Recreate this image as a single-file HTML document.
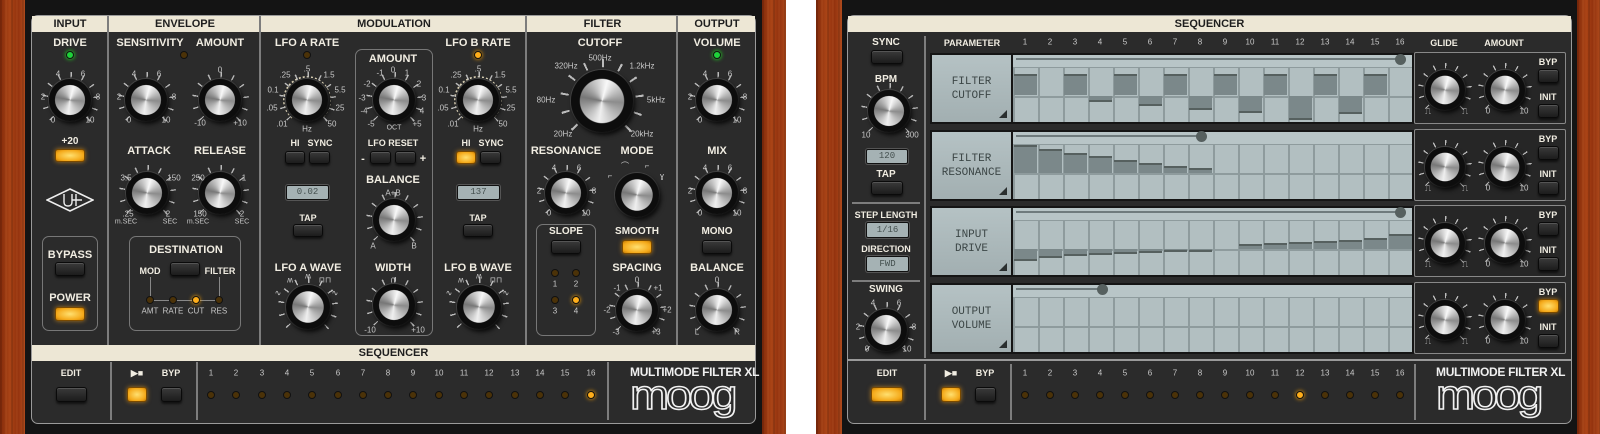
<!DOCTYPE html>
<html><head><meta charset="utf-8"><style>
*{margin:0;padding:0;box-sizing:border-box}
body{width:1600px;height:434px;background:#fff;position:relative;overflow:hidden;font-family:"Liberation Sans",sans-serif}
.a{position:absolute}
.wood{position:absolute;top:0;height:434px;background:repeating-linear-gradient(90deg,rgba(0,0,0,.12) 0 2px,transparent 2px 5px,rgba(255,160,90,.08) 5px 7px,transparent 7px 11px),linear-gradient(90deg,#832a0a,#aa4416 40%,#93320e 70%,#ae4a1c)}
.frame{position:absolute;top:0;height:434px;background:#141414}
.panel{position:absolute;top:15px;height:409px;background:#2b2b2b;border:1px solid #9a9a9a;border-radius:7px;overflow:hidden}
.cream{position:absolute;background:#ede7d5;color:#1e1e1e;font-weight:bold;font-size:11px;text-align:center;line-height:16px}
.vl{position:absolute;width:2px;background:#7d7d7d}
.hl{position:absolute;height:2px;background:#7d7d7d}
.t{position:absolute;transform:translateX(-50%);white-space:nowrap;color:#f1ede2;font-weight:bold;font-size:11px;line-height:12px}
.s{position:absolute;transform:translate(-50%,-50%);white-space:nowrap;color:#c9c9c9;font-size:8px;line-height:9px}
.b{position:absolute;background:linear-gradient(#3a3a3a,#1c1c1c);border:1px solid #0a0a0a;border-radius:3px;box-shadow:0 1px 0 #555 inset,0 2px 2px rgba(0,0,0,.6)}
.o{background:radial-gradient(ellipse at 50% 50%,#ffe070,#f4a818 70%,#c07a08);border-color:#7a4a00;box-shadow:0 0 5px rgba(255,170,30,.6)}
.led{position:absolute;width:8px;height:8px;margin:-4px 0 0 -4px;border-radius:50%;background:#4b3208;border:1px solid #111}
.led.y{background:#ffae1a;box-shadow:0 0 4px #ffa500}
.led.g{background:#1fd23a;box-shadow:0 0 4px #2f2}
.lcd{position:absolute;background:#a5b2b4;border:1px solid #111;border-radius:2px;color:#44504f;font-family:"Liberation Mono",monospace;font-size:9px;text-align:center;box-shadow:0 0 0 1px #555}
.box{position:absolute;border:1px solid #777;border-radius:7px}
.kn{position:absolute;width:calc(var(--d)*1.5);height:calc(var(--d)*1.5);margin-left:calc(var(--d)*-.75);margin-top:calc(var(--d)*-.75);border-radius:50%;background:radial-gradient(circle closest-side,#2b2b2b 0 80%,transparent 81%),conic-gradient(from 140deg,#2b2b2b 0 80deg,transparent 0),repeating-conic-gradient(from 225deg,#bbb 0 3deg,transparent 0 27deg)}
.kn::after{content:"";position:absolute;inset:calc(var(--d)*.2);border-radius:50%;background:radial-gradient(circle closest-side,transparent 0 70%,#0d0d0d 73% 100%),conic-gradient(from 15deg,#f8f8f8,#8c8c8c 22%,#efefef 48%,#777 74%,#f8f8f8);box-shadow:2px 3px 5px rgba(0,0,0,.8),0 0 0 1px #444}
.ring{position:absolute;border:2px dotted #d8cfb4;border-radius:50%}
.lab{position:absolute;background:linear-gradient(#b5c2c4,#a2afb1);border:2px solid #151515;color:#3c4646;font-family:"Liberation Mono",monospace;font-size:11px;text-align:center;line-height:14px;padding-top:20px}
.lab::after{content:"";position:absolute;right:4px;bottom:4px;border-left:8px solid transparent;border-bottom:8px solid #2a2f2f}
.grid{position:absolute;border:2px solid #151515;background:linear-gradient(#b8c5c7 0 12px,#8e9b9d 12px 13px,transparent 13px),repeating-linear-gradient(90deg,#8e9b9d 0 2px,transparent 2px 25px),linear-gradient(transparent 0 41px,#8e9b9d 41px 43px,transparent 43px),#b2bfc1}
.sl{position:absolute;height:2px;background:#6f7b7d}
.dot{position:absolute;width:11px;height:11px;border-radius:50%;background:#56605f;margin:-5px 0 0 -5px}
.bar{position:absolute;width:23px;background:#7b888a;border-top:2px solid #56605f}
.bar.d{border-top:none;border-bottom:2px solid #56605f}
.kb{position:absolute;border:1px solid #888;background:#262626;border-radius:2px}
.logo1{position:absolute;color:#f0f0f0;font-weight:bold;font-size:12px;letter-spacing:-.3px;white-space:nowrap}
.moog{position:absolute;font-family:"Liberation Sans",sans-serif;font-size:42px;font-weight:normal;letter-spacing:-3px;color:transparent;-webkit-text-stroke:1.5px #f2f2f2;line-height:34px;transform:scaleX(1.12);transform-origin:left}
.k2{background:radial-gradient(circle closest-side,#262626 0 80%,transparent 81%),conic-gradient(from 140deg,#262626 0 80deg,transparent 0),repeating-conic-gradient(from 225deg,#bbb 0 3deg,transparent 0 27deg)}
</style></head><body>

<!-- LEFT PLUGIN -->
<div class="wood" style="left:0;width:25px"></div>
<div class="frame" style="left:25px;width:737px"></div>
<div class="wood" style="left:762px;width:24px"></div>
<div class="panel" style="left:31px;width:725px"></div>
<div class="cream" style="left:32px;top:16px;width:723px;height:16px"></div>
<div class="cream" style="left:32px;top:16px;width:76px">INPUT</div>
<div class="cream" style="left:110px;top:16px;width:150px">ENVELOPE</div>
<div class="cream" style="left:262px;top:16px;width:264px">MODULATION</div>
<div class="cream" style="left:528px;top:16px;width:149px">FILTER</div>
<div class="cream" style="left:679px;top:16px;width:76px">OUTPUT</div>
<div class="vl" style="left:107px;top:16px;height:329px"></div>
<div class="vl" style="left:259px;top:16px;height:329px"></div>
<div class="vl" style="left:525px;top:16px;height:329px"></div>
<div class="vl" style="left:676px;top:16px;height:329px"></div>
<div class="cream" style="left:32px;top:345px;width:723px;height:16px">SEQUENCER</div>
<div class="vl" style="left:110px;top:362px;height:58px"></div>
<div class="vl" style="left:196px;top:362px;height:58px"></div>
<div class="vl" style="left:607px;top:362px;height:58px"></div>

<!-- INPUT -->
<div class="t" style="left:70px;top:37px">DRIVE</div>
<div class="led g" style="left:70px;top:55px"></div>
<div class="kn" style="left:70px;top:100px;--d:38px"></div>
<div class="s" style="left:53px;top:120px">0</div><div class="s" style="left:90px;top:120px">10</div><div class="s" style="left:43px;top:97px">2</div><div class="s" style="left:98px;top:97px">8</div><div class="s" style="left:58px;top:74px">4</div><div class="s" style="left:83px;top:74px">6</div>
<div class="t" style="left:70px;top:136px;font-size:10px">+20</div>
<div class="b o" style="left:55px;top:149px;width:30px;height:13px"></div>
<svg class="a" style="left:46px;top:188px" width="48" height="24" viewBox="0 0 48 24"><polygon points="24,1 47,12 24,23 1,12" fill="none" stroke="#eee" stroke-width="1.6"/><path d="M18 6v8q0 4 4 4h0q4 0 4-4V6M26 12h10M30 6v12" fill="none" stroke="#eee" stroke-width="1.4"/></svg>
<div class="box" style="left:42px;top:236px;width:56px;height:95px"></div>
<div class="t" style="left:70px;top:249px">BYPASS</div>
<div class="b" style="left:55px;top:262px;width:30px;height:14px"></div>
<div class="t" style="left:70px;top:292px">POWER</div>
<div class="b o" style="left:55px;top:307px;width:30px;height:14px"></div>

<!-- ENVELOPE -->
<div class="t" style="left:150px;top:37px">SENSITIVITY</div>
<div class="t" style="left:220px;top:37px">AMOUNT</div>
<div class="led" style="left:184px;top:55px"></div>
<div class="kn" style="left:146px;top:100px;--d:38px"></div>
<div class="s" style="left:129px;top:120px">0</div><div class="s" style="left:166px;top:120px">10</div><div class="s" style="left:119px;top:97px">2</div><div class="s" style="left:174px;top:97px">8</div><div class="s" style="left:134px;top:74px">4</div><div class="s" style="left:159px;top:74px">6</div>
<div class="kn" style="left:220px;top:100px;--d:38px"></div>
<div class="s" style="left:200px;top:123px">-10</div><div class="s" style="left:240px;top:123px">+10</div><div class="s" style="left:220px;top:70px">0</div>
<div class="t" style="left:149px;top:145px">ATTACK</div>
<div class="t" style="left:220px;top:145px">RELEASE</div>
<div class="kn" style="left:147px;top:193px;--d:38px"></div>
<div class="s" style="left:126px;top:178px">3.5</div><div class="s" style="left:174px;top:178px">150</div><div class="s" style="left:128px;top:214px">.25</div><div class="s" style="left:168px;top:214px">2</div><div class="s" style="left:126px;top:222px;font-size:7px">m.SEC</div><div class="s" style="left:170px;top:222px;font-size:7px">SEC</div>
<div class="kn" style="left:220px;top:193px;--d:38px"></div>
<div class="s" style="left:198px;top:178px">250</div><div class="s" style="left:244px;top:178px">1</div><div class="s" style="left:200px;top:214px">150</div><div class="s" style="left:242px;top:214px">2</div><div class="s" style="left:198px;top:222px;font-size:7px">m.SEC</div><div class="s" style="left:242px;top:222px;font-size:7px">SEC</div>
<div class="box" style="left:129px;top:236px;width:112px;height:95px"></div>
<div class="t" style="left:186px;top:244px">DESTINATION</div>
<div class="t" style="left:150px;top:265px;font-size:9px">MOD</div>
<div class="t" style="left:220px;top:265px;font-size:9px">FILTER</div>
<div class="b" style="left:170px;top:262px;width:30px;height:14px"></div>
<div class="a" style="left:150px;top:277px;width:1px;height:23px;background:#888"></div>
<div class="a" style="left:219px;top:277px;width:1px;height:23px;background:#888"></div>
<div class="a" style="left:150px;top:300px;width:70px;height:1px;background:#888"></div>
<div class="led" style="left:150px;top:300px"></div><div class="led" style="left:173px;top:300px"></div><div class="led y" style="left:196px;top:300px"></div><div class="led" style="left:219px;top:300px"></div>
<div class="s" style="left:150px;top:311px">AMT</div><div class="s" style="left:173px;top:311px">RATE</div><div class="s" style="left:196px;top:311px">CUT</div><div class="s" style="left:219px;top:311px">RES</div>

<!-- MODULATION -->
<div class="t" style="left:307px;top:37px">LFO A RATE</div>
<div class="led" style="left:307px;top:55px"></div>
<div class="ring" style="left:283px;top:76px;width:48px;height:48px"></div>
<div class="kn" style="left:307px;top:100px;--d:38px"></div>
<div class="s" style="left:285px;top:75px">.25</div><div class="s" style="left:307px;top:69px">.5</div><div class="s" style="left:329px;top:75px">1.5</div><div class="s" style="left:273px;top:90px">0.1</div><div class="s" style="left:340px;top:90px">5.5</div><div class="s" style="left:272px;top:108px">.05</div><div class="s" style="left:340px;top:108px">25</div><div class="s" style="left:282px;top:124px">.01</div><div class="s" style="left:332px;top:124px">50</div><div class="s" style="left:307px;top:129px">Hz</div>
<div class="t" style="left:295px;top:137px;font-size:9px">HI</div><div class="t" style="left:320px;top:137px;font-size:9px">SYNC</div>
<div class="b" style="left:285px;top:151px;width:20px;height:13px"></div><div class="b" style="left:309px;top:151px;width:21px;height:13px"></div>
<div class="lcd" style="left:286px;top:185px;width:43px;height:15px;line-height:13px">0.02</div>
<div class="t" style="left:308px;top:212px;font-size:9px">TAP</div>
<div class="b" style="left:293px;top:224px;width:30px;height:13px"></div>
<div class="t" style="left:308px;top:262px">LFO A WAVE</div>
<div class="kn" style="left:308px;top:307px;--d:40px"></div>
<div class="s" style="left:278px;top:293px">∿</div><div class="s" style="left:290px;top:280px">ʍ</div><div class="s" style="left:308px;top:276px">ʍ</div><div class="s" style="left:325px;top:280px">⊓⊓</div><div class="s" style="left:335px;top:293px">∿</div>

<div class="box" style="left:355px;top:49px;width:78px;height:287px"></div>
<div class="t" style="left:393px;top:53px">AMOUNT</div>
<div class="kn" style="left:394px;top:100px;--d:38px"></div>
<div class="s" style="left:380px;top:73px">-1</div><div class="s" style="left:393px;top:70px">0</div><div class="s" style="left:407px;top:73px">1</div><div class="s" style="left:367px;top:84px">-2</div><div class="s" style="left:419px;top:84px">2</div><div class="s" style="left:362px;top:98px">-3</div><div class="s" style="left:424px;top:98px">3</div><div class="s" style="left:364px;top:111px">-4</div><div class="s" style="left:422px;top:111px">4</div><div class="s" style="left:371px;top:124px">-5</div><div class="s" style="left:417px;top:124px">+5</div><div class="s" style="left:394px;top:128px;font-size:7px">OCT</div>
<div class="t" style="left:393px;top:137px;font-size:9px">LFO RESET</div>
<div class="t" style="left:363px;top:153px">-</div><div class="t" style="left:423px;top:153px">+</div>
<div class="b" style="left:370px;top:151px;width:21px;height:13px"></div><div class="b" style="left:395px;top:151px;width:21px;height:13px"></div>
<div class="t" style="left:393px;top:174px">BALANCE</div>
<div class="s" style="left:393px;top:193px">A+B</div>
<div class="kn" style="left:394px;top:220px;--d:38px"></div>
<div class="s" style="left:373px;top:246px">A</div><div class="s" style="left:414px;top:246px">B</div>
<div class="t" style="left:393px;top:262px">WIDTH</div>
<div class="s" style="left:393px;top:281px">0</div>
<div class="kn" style="left:394px;top:305px;--d:38px"></div>
<div class="s" style="left:370px;top:330px">-10</div><div class="s" style="left:418px;top:330px">+10</div>

<div class="t" style="left:478px;top:37px">LFO B RATE</div>
<div class="led y" style="left:478px;top:55px"></div>
<div class="ring" style="left:454px;top:76px;width:48px;height:48px"></div>
<div class="kn" style="left:478px;top:100px;--d:38px"></div>
<div class="s" style="left:456px;top:75px">.25</div><div class="s" style="left:478px;top:69px">.5</div><div class="s" style="left:500px;top:75px">1.5</div><div class="s" style="left:444px;top:90px">0.1</div><div class="s" style="left:511px;top:90px">5.5</div><div class="s" style="left:443px;top:108px">.05</div><div class="s" style="left:511px;top:108px">25</div><div class="s" style="left:453px;top:124px">.01</div><div class="s" style="left:503px;top:124px">50</div><div class="s" style="left:478px;top:129px">Hz</div>
<div class="t" style="left:466px;top:137px;font-size:9px">HI</div><div class="t" style="left:491px;top:137px;font-size:9px">SYNC</div>
<div class="b o" style="left:456px;top:151px;width:20px;height:13px"></div><div class="b" style="left:480px;top:151px;width:21px;height:13px"></div>
<div class="lcd" style="left:457px;top:185px;width:43px;height:15px;line-height:13px">137</div>
<div class="t" style="left:478px;top:212px;font-size:9px">TAP</div>
<div class="b" style="left:463px;top:224px;width:30px;height:13px"></div>
<div class="t" style="left:478px;top:262px">LFO B WAVE</div>
<div class="kn" style="left:479px;top:307px;--d:40px"></div>
<div class="s" style="left:449px;top:293px">∿</div><div class="s" style="left:461px;top:280px">ʍ</div><div class="s" style="left:479px;top:276px">ʍ</div><div class="s" style="left:496px;top:280px">⊓⊓</div><div class="s" style="left:506px;top:293px">∿</div>

<!-- FILTER -->
<div class="t" style="left:600px;top:37px">CUTOFF</div>
<div class="kn" style="left:602px;top:101px;--d:56px"></div>
<div class="s" style="left:566px;top:66px">320Hz</div><div class="s" style="left:600px;top:58px">500Hz</div><div class="s" style="left:642px;top:66px">1.2kHz</div><div class="s" style="left:546px;top:100px">80Hz</div><div class="s" style="left:656px;top:100px">5kHz</div><div class="s" style="left:563px;top:134px">20Hz</div><div class="s" style="left:642px;top:134px">20kHz</div>
<div class="t" style="left:566px;top:145px">RESONANCE</div>
<div class="t" style="left:637px;top:145px">MODE</div>
<div class="kn" style="left:566px;top:193px;--d:38px"></div>
<div class="s" style="left:549px;top:213px">0</div><div class="s" style="left:586px;top:213px">10</div><div class="s" style="left:539px;top:191px">2</div><div class="s" style="left:594px;top:191px">8</div><div class="s" style="left:554px;top:168px">4</div><div class="s" style="left:579px;top:168px">6</div>
<div class="kn" style="left:637px;top:195px;--d:40px;background:none"></div>
<div class="s" style="left:610px;top:176px">⌐</div><div class="s" style="left:625px;top:166px">⌒</div><div class="s" style="left:647px;top:166px">⌐</div><div class="s" style="left:662px;top:176px">ɣ</div>
<div class="box" style="left:536px;top:224px;width:60px;height:112px"></div>
<div class="t" style="left:566px;top:226px;font-size:10px">SLOPE</div>
<div class="b" style="left:551px;top:240px;width:30px;height:14px"></div>
<div class="led" style="left:555px;top:273px"></div><div class="led" style="left:576px;top:273px"></div><div class="led" style="left:555px;top:300px"></div><div class="led y" style="left:576px;top:300px"></div>
<div class="s" style="left:555px;top:284px">1</div><div class="s" style="left:576px;top:284px">2</div><div class="s" style="left:555px;top:311px">3</div><div class="s" style="left:576px;top:311px">4</div>
<div class="t" style="left:637px;top:226px;font-size:10px">SMOOTH</div>
<div class="b o" style="left:622px;top:240px;width:30px;height:14px"></div>
<div class="t" style="left:637px;top:262px">SPACING</div>
<div class="kn" style="left:637px;top:310px;--d:38px"></div>
<div class="s" style="left:637px;top:280px">0</div><div class="s" style="left:617px;top:288px">-1</div><div class="s" style="left:658px;top:288px">+1</div><div class="s" style="left:607px;top:310px">-2</div><div class="s" style="left:667px;top:310px">+2</div><div class="s" style="left:616px;top:332px">-3</div><div class="s" style="left:656px;top:332px">+3</div>

<!-- OUTPUT -->
<div class="t" style="left:717px;top:37px">VOLUME</div>
<div class="led g" style="left:717px;top:55px"></div>
<div class="kn" style="left:717px;top:100px;--d:38px"></div>
<div class="s" style="left:700px;top:120px">0</div><div class="s" style="left:737px;top:120px">10</div><div class="s" style="left:690px;top:97px">2</div><div class="s" style="left:745px;top:97px">8</div><div class="s" style="left:705px;top:74px">4</div><div class="s" style="left:730px;top:74px">6</div>
<div class="t" style="left:717px;top:145px">MIX</div>
<div class="kn" style="left:717px;top:193px;--d:38px"></div>
<div class="s" style="left:700px;top:213px">0</div><div class="s" style="left:737px;top:213px">10</div><div class="s" style="left:690px;top:191px">2</div><div class="s" style="left:745px;top:191px">8</div><div class="s" style="left:705px;top:168px">4</div><div class="s" style="left:730px;top:168px">6</div>
<div class="t" style="left:717px;top:226px;font-size:10px">MONO</div>
<div class="b" style="left:702px;top:240px;width:30px;height:14px"></div>
<div class="t" style="left:717px;top:262px">BALANCE</div>
<div class="kn" style="left:717px;top:310px;--d:38px"></div>
<div class="s" style="left:717px;top:280px">0</div><div class="s" style="left:697px;top:332px">L</div><div class="s" style="left:737px;top:332px">R</div>

<!-- LEFT BOTTOM -->
<div class="t" style="left:71px;top:367px;font-size:9px">EDIT</div>
<div class="b" style="left:56px;top:387px;width:31px;height:15px"></div>
<div class="t" style="left:137px;top:367px;font-size:9px">▶■</div>
<div class="t" style="left:171px;top:367px;font-size:9px">BYP</div>
<div class="b o" style="left:127px;top:387px;width:20px;height:15px"></div>
<div class="b" style="left:161px;top:387px;width:21px;height:15px"></div>
<div class="s" style="left:211px;top:373px">1</div><div class="s" style="left:236px;top:373px">2</div><div class="s" style="left:262px;top:373px">3</div><div class="s" style="left:287px;top:373px">4</div><div class="s" style="left:312px;top:373px">5</div><div class="s" style="left:338px;top:373px">6</div><div class="s" style="left:363px;top:373px">7</div><div class="s" style="left:388px;top:373px">8</div><div class="s" style="left:413px;top:373px">9</div><div class="s" style="left:439px;top:373px">10</div><div class="s" style="left:464px;top:373px">11</div><div class="s" style="left:489px;top:373px">12</div><div class="s" style="left:515px;top:373px">13</div><div class="s" style="left:540px;top:373px">14</div><div class="s" style="left:565px;top:373px">15</div><div class="s" style="left:591px;top:373px">16</div>
<div class="led" style="left:211px;top:395px"></div><div class="led" style="left:236px;top:395px"></div><div class="led" style="left:262px;top:395px"></div><div class="led" style="left:287px;top:395px"></div><div class="led" style="left:312px;top:395px"></div><div class="led" style="left:338px;top:395px"></div><div class="led" style="left:363px;top:395px"></div><div class="led" style="left:388px;top:395px"></div><div class="led" style="left:413px;top:395px"></div><div class="led" style="left:439px;top:395px"></div><div class="led" style="left:464px;top:395px"></div><div class="led" style="left:489px;top:395px"></div><div class="led" style="left:515px;top:395px"></div><div class="led" style="left:540px;top:395px"></div><div class="led" style="left:565px;top:395px"></div><div class="led y" style="left:591px;top:395px"></div>
<div class="logo1" style="left:630px;top:365px">MULTIMODE FILTER XL</div>
<div class="moog" style="left:630px;top:378px">moog</div>

<!-- RIGHT PLUGIN -->
<div class="wood" style="left:816px;width:26px"></div>
<div class="frame" style="left:842px;width:735px"></div>
<div class="wood" style="left:1577px;width:23px"></div>
<div class="panel" style="left:847px;width:725px"></div>
<div class="cream" style="left:848px;top:16px;width:723px;height:16px">SEQUENCER</div>
<div class="vl" style="left:924px;top:36px;height:322px"></div>
<div class="hl" style="left:852px;top:202px;width:68px"></div>
<div class="hl" style="left:852px;top:280px;width:68px"></div>
<div class="hl" style="left:848px;top:359px;width:723px;background:#9a9a9a"></div>
<div class="vl" style="left:924px;top:364px;height:56px"></div>
<div class="vl" style="left:1010px;top:364px;height:56px"></div>
<div class="vl" style="left:1414px;top:364px;height:56px"></div>

<div class="t" style="left:886px;top:37px;font-size:10px">SYNC</div>
<div class="b" style="left:871px;top:50px;width:32px;height:14px"></div>
<div class="t" style="left:886px;top:74px;font-size:10px">BPM</div>
<div class="kn" style="left:889px;top:111px;--d:38px"></div>
<div class="s" style="left:866px;top:135px">10</div><div class="s" style="left:912px;top:135px">300</div>
<div class="lcd" style="left:866px;top:149px;width:42px;height:15px;line-height:13px">120</div>
<div class="t" style="left:886px;top:169px;font-size:10px">TAP</div>
<div class="b" style="left:871px;top:181px;width:32px;height:14px"></div>
<div class="t" style="left:886px;top:209px;font-size:9px">STEP LENGTH</div>
<div class="lcd" style="left:866px;top:222px;width:43px;height:16px;line-height:14px">1/16</div>
<div class="t" style="left:886px;top:243px;font-size:9px">DIRECTION</div>
<div class="lcd" style="left:866px;top:256px;width:43px;height:16px;line-height:14px">FWD</div>
<div class="t" style="left:886px;top:284px;font-size:10px">SWING</div>
<div class="kn" style="left:886px;top:330px;--d:38px"></div>
<div class="s" style="left:867px;top:349px">0</div><div class="s" style="left:907px;top:349px">10</div><div class="s" style="left:858px;top:327px">2</div><div class="s" style="left:914px;top:327px">8</div><div class="s" style="left:873px;top:303px">4</div><div class="s" style="left:899px;top:303px">6</div>

<div class="t" style="left:972px;top:37px;font-size:9px">PARAMETER</div>
<div class="s" style="left:1025px;top:42px">1</div><div class="s" style="left:1050px;top:42px">2</div><div class="s" style="left:1075px;top:42px">3</div><div class="s" style="left:1100px;top:42px">4</div><div class="s" style="left:1125px;top:42px">5</div><div class="s" style="left:1150px;top:42px">6</div><div class="s" style="left:1175px;top:42px">7</div><div class="s" style="left:1200px;top:42px">8</div><div class="s" style="left:1225px;top:42px">9</div><div class="s" style="left:1250px;top:42px">10</div><div class="s" style="left:1275px;top:42px">11</div><div class="s" style="left:1300px;top:42px">12</div><div class="s" style="left:1325px;top:42px">13</div><div class="s" style="left:1350px;top:42px">14</div><div class="s" style="left:1375px;top:42px">15</div><div class="s" style="left:1400px;top:42px">16</div>
<div class="t" style="left:1444px;top:37px;font-size:9px">GLIDE</div>
<div class="t" style="left:1504px;top:37px;font-size:9px">AMOUNT</div>

<!-- rows -->
<div class="lab" style="left:930px;top:53px;width:83px;height:71px">FILTER<br>CUTOFF</div>
<div class="grid" style="left:1011px;top:53px;width:403px;height:71px"></div>
<div class="sl" style="left:1016px;top:58px;width:384px"></div><div class="dot" style="left:1400px;top:59px"></div>
<div class="bar" style="left:1014px;top:74px;height:21px"></div><div class="bar" style="left:1064px;top:74px;height:21px"></div><div class="bar" style="left:1114px;top:74px;height:21px"></div><div class="bar" style="left:1164px;top:74px;height:21px"></div><div class="bar" style="left:1214px;top:74px;height:21px"></div><div class="bar" style="left:1264px;top:74px;height:21px"></div><div class="bar" style="left:1314px;top:74px;height:21px"></div><div class="bar" style="left:1364px;top:74px;height:21px"></div>
<div class="bar d" style="left:1089px;top:96px;height:6px"></div><div class="bar d" style="left:1139px;top:96px;height:10px"></div><div class="bar d" style="left:1189px;top:96px;height:14px"></div><div class="bar d" style="left:1239px;top:96px;height:17px"></div><div class="bar d" style="left:1289px;top:96px;height:24px"></div><div class="bar d" style="left:1339px;top:96px;height:18px"></div>

<div class="lab" style="left:930px;top:130px;width:83px;height:71px">FILTER<br>RESONANCE</div>
<div class="grid" style="left:1011px;top:130px;width:403px;height:71px"></div>
<div class="sl" style="left:1016px;top:135px;width:184px"></div><div class="dot" style="left:1201px;top:136px"></div>
<div class="bar" style="left:1014px;top:145px;height:28px"></div><div class="bar" style="left:1039px;top:149px;height:24px"></div><div class="bar" style="left:1064px;top:153px;height:20px"></div><div class="bar" style="left:1089px;top:156px;height:17px"></div><div class="bar" style="left:1114px;top:160px;height:13px"></div><div class="bar" style="left:1139px;top:163px;height:10px"></div><div class="bar" style="left:1164px;top:166px;height:7px"></div><div class="bar" style="left:1189px;top:168px;height:5px"></div>

<div class="lab" style="left:930px;top:206px;width:83px;height:71px">INPUT<br>DRIVE</div>
<div class="grid" style="left:1011px;top:206px;width:403px;height:71px"></div>
<div class="sl" style="left:1016px;top:211px;width:384px"></div><div class="dot" style="left:1400px;top:212px"></div>
<div class="bar d" style="left:1014px;top:249px;height:12px"></div><div class="bar d" style="left:1039px;top:249px;height:9px"></div><div class="bar d" style="left:1064px;top:249px;height:7px"></div><div class="bar d" style="left:1089px;top:249px;height:6px"></div><div class="bar d" style="left:1114px;top:249px;height:5px"></div><div class="bar d" style="left:1139px;top:249px;height:4px"></div><div class="bar d" style="left:1164px;top:249px;height:3px"></div><div class="bar d" style="left:1189px;top:249px;height:3px"></div>
<div class="bar" style="left:1239px;top:244px;height:5px"></div><div class="bar" style="left:1264px;top:243px;height:6px"></div><div class="bar" style="left:1289px;top:242px;height:7px"></div><div class="bar" style="left:1314px;top:241px;height:8px"></div><div class="bar" style="left:1339px;top:240px;height:9px"></div><div class="bar" style="left:1364px;top:238px;height:11px"></div><div class="bar" style="left:1389px;top:234px;height:15px"></div>

<div class="lab" style="left:930px;top:283px;width:83px;height:71px">OUTPUT<br>VOLUME</div>
<div class="grid" style="left:1011px;top:283px;width:403px;height:71px"></div>
<div class="sl" style="left:1016px;top:288px;width:86px"></div><div class="dot" style="left:1102px;top:289px"></div>

<!-- knob boxes -->
<div class="kb" style="left:1414px;top:52px;width:152px;height:72px"></div>
<div class="kb" style="left:1414px;top:129px;width:152px;height:72px"></div>
<div class="kb" style="left:1414px;top:205px;width:152px;height:72px"></div>
<div class="kb" style="left:1414px;top:282px;width:152px;height:72px"></div>
<div class="kn k2" style="left:1445px;top:90px;--d:36px"></div>
<div class="kn k2" style="left:1505px;top:90px;--d:36px"></div>
<div class="kn k2" style="left:1445px;top:167px;--d:36px"></div>
<div class="kn k2" style="left:1505px;top:167px;--d:36px"></div>
<div class="kn k2" style="left:1445px;top:243px;--d:36px"></div>
<div class="kn k2" style="left:1505px;top:243px;--d:36px"></div>
<div class="kn k2" style="left:1445px;top:320px;--d:36px"></div>
<div class="kn k2" style="left:1505px;top:320px;--d:36px"></div>
<div class="s" style="left:1428px;top:111px">⎍</div><div class="s" style="left:1465px;top:111px">⎍</div><div class="s" style="left:1488px;top:111px">0</div><div class="s" style="left:1524px;top:111px">10</div>
<div class="s" style="left:1428px;top:188px">⎍</div><div class="s" style="left:1465px;top:188px">⎍</div><div class="s" style="left:1488px;top:188px">0</div><div class="s" style="left:1524px;top:188px">10</div>
<div class="s" style="left:1428px;top:264px">⎍</div><div class="s" style="left:1465px;top:264px">⎍</div><div class="s" style="left:1488px;top:264px">0</div><div class="s" style="left:1524px;top:264px">10</div>
<div class="s" style="left:1428px;top:341px">⎍</div><div class="s" style="left:1465px;top:341px">⎍</div><div class="s" style="left:1488px;top:341px">0</div><div class="s" style="left:1524px;top:341px">10</div>

<div class="t" style="left:1548px;top:56px;font-size:9px">BYP</div><div class="b" style="left:1538px;top:69px;width:21px;height:14px"></div><div class="t" style="left:1548px;top:91px;font-size:9px">INIT</div><div class="b" style="left:1538px;top:104px;width:21px;height:14px"></div>
<div class="t" style="left:1548px;top:133px;font-size:9px">BYP</div><div class="b" style="left:1538px;top:146px;width:21px;height:14px"></div><div class="t" style="left:1548px;top:168px;font-size:9px">INIT</div><div class="b" style="left:1538px;top:181px;width:21px;height:14px"></div>
<div class="t" style="left:1548px;top:209px;font-size:9px">BYP</div><div class="b" style="left:1538px;top:222px;width:21px;height:14px"></div><div class="t" style="left:1548px;top:244px;font-size:9px">INIT</div><div class="b" style="left:1538px;top:257px;width:21px;height:14px"></div>
<div class="t" style="left:1548px;top:286px;font-size:9px">BYP</div><div class="b o" style="left:1538px;top:299px;width:21px;height:14px"></div><div class="t" style="left:1548px;top:321px;font-size:9px">INIT</div><div class="b" style="left:1538px;top:334px;width:21px;height:14px"></div>

<!-- right bottom -->
<div class="t" style="left:887px;top:367px;font-size:9px">EDIT</div>
<div class="b o" style="left:871px;top:387px;width:32px;height:15px"></div>
<div class="t" style="left:951px;top:367px;font-size:9px">▶■</div>
<div class="t" style="left:985px;top:367px;font-size:9px">BYP</div>
<div class="b o" style="left:941px;top:387px;width:20px;height:15px"></div>
<div class="b" style="left:975px;top:387px;width:21px;height:15px"></div>
<div class="s" style="left:1025px;top:373px">1</div><div class="s" style="left:1050px;top:373px">2</div><div class="s" style="left:1075px;top:373px">3</div><div class="s" style="left:1100px;top:373px">4</div><div class="s" style="left:1125px;top:373px">5</div><div class="s" style="left:1150px;top:373px">6</div><div class="s" style="left:1175px;top:373px">7</div><div class="s" style="left:1200px;top:373px">8</div><div class="s" style="left:1225px;top:373px">9</div><div class="s" style="left:1250px;top:373px">10</div><div class="s" style="left:1275px;top:373px">11</div><div class="s" style="left:1300px;top:373px">12</div><div class="s" style="left:1325px;top:373px">13</div><div class="s" style="left:1350px;top:373px">14</div><div class="s" style="left:1375px;top:373px">15</div><div class="s" style="left:1400px;top:373px">16</div>
<div class="led" style="left:1025px;top:395px"></div><div class="led" style="left:1050px;top:395px"></div><div class="led" style="left:1075px;top:395px"></div><div class="led" style="left:1100px;top:395px"></div><div class="led" style="left:1125px;top:395px"></div><div class="led" style="left:1150px;top:395px"></div><div class="led" style="left:1175px;top:395px"></div><div class="led" style="left:1200px;top:395px"></div><div class="led" style="left:1225px;top:395px"></div><div class="led" style="left:1250px;top:395px"></div><div class="led" style="left:1275px;top:395px"></div><div class="led y" style="left:1300px;top:395px"></div><div class="led" style="left:1325px;top:395px"></div><div class="led" style="left:1350px;top:395px"></div><div class="led" style="left:1375px;top:395px"></div><div class="led" style="left:1400px;top:395px"></div>
<div class="logo1" style="left:1436px;top:365px">MULTIMODE FILTER XL</div>
<div class="moog" style="left:1436px;top:378px">moog</div>
</body></html>
